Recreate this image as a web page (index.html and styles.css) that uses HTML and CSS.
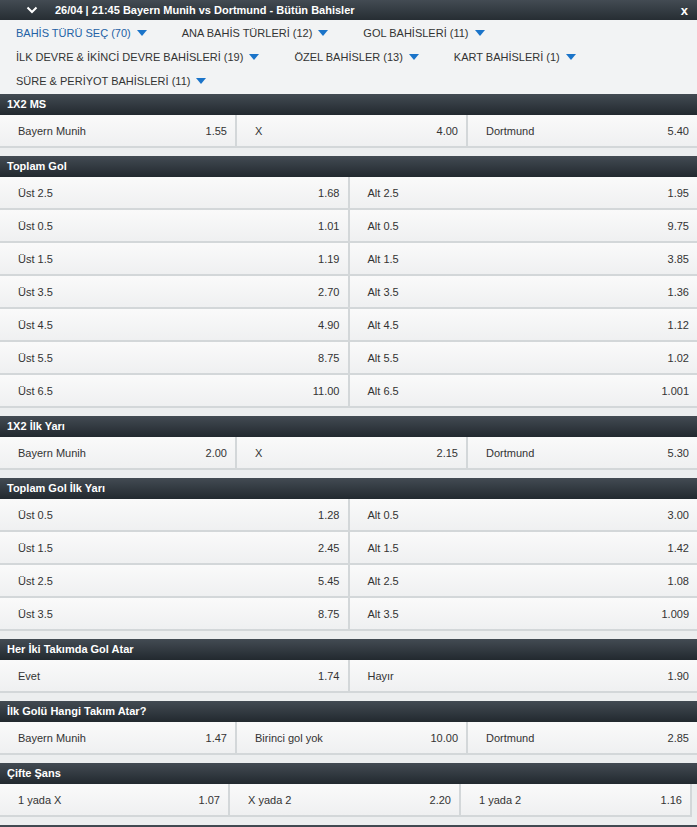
FILE: index.html
```html
<!DOCTYPE html>
<html>
<head>
    <meta charset="UTF-8">
    <meta name="viewport" content="width=device-width, initial-scale=1.0">
    <title>Bayern Munih vs Dortmund - Bütün Bahisler</title>
    <link rel="stylesheet" href="styles.css">
</head>
<body>
    <div class="match-bar">
        <svg class="chevron" width="12" height="8" viewBox="0 0 12 8">
            <polyline points="1.5,1.5 6,6 10.5,1.5" fill="none" stroke="#fff" stroke-width="2"/>
        </svg>
        <span class="match-title">26/04 | 21:45 Bayern Munih vs Dortmund - Bütün Bahisler</span>
        <span class="close">x</span>
    </div>

    <div class="filters">
        <div class="filter active">BAHİS TÜRÜ SEÇ (70) <span class="caret"></span></div>
        <div class="filter">ANA BAHİS TÜRLERİ (12) <span class="caret"></span></div>
        <div class="filter">GOL BAHİSLERİ (11) <span class="caret"></span></div>
        <div class="filter">İLK DEVRE &amp; İKİNCİ DEVRE BAHİSLERİ (19) <span class="caret"></span></div>
        <div class="filter">ÖZEL BAHİSLER (13) <span class="caret"></span></div>
        <div class="filter">KART BAHİSLERİ (1) <span class="caret"></span></div>
        <div class="filter">SÜRE &amp; PERİYOT BAHİSLERİ (11) <span class="caret"></span></div>
    </div>

    <div class="market">
        <div class="market-title">1X2 MS</div>
        <div class="odds cols-3">
            <div class="cell"><span>Bayern Munih</span><span>1.55</span></div>
            <div class="cell"><span>X</span><span>4.00</span></div>
            <div class="cell"><span>Dortmund</span><span>5.40</span></div>
        </div>
    </div>

    <div class="market">
        <div class="market-title">Toplam Gol</div>
        <div class="odds cols-2">
            <div class="cell"><span>Üst 2.5</span><span>1.68</span></div>
            <div class="cell"><span>Alt 2.5</span><span>1.95</span></div>
            <div class="cell"><span>Üst 0.5</span><span>1.01</span></div>
            <div class="cell"><span>Alt 0.5</span><span>9.75</span></div>
            <div class="cell"><span>Üst 1.5</span><span>1.19</span></div>
            <div class="cell"><span>Alt 1.5</span><span>3.85</span></div>
            <div class="cell"><span>Üst 3.5</span><span>2.70</span></div>
            <div class="cell"><span>Alt 3.5</span><span>1.36</span></div>
            <div class="cell"><span>Üst 4.5</span><span>4.90</span></div>
            <div class="cell"><span>Alt 4.5</span><span>1.12</span></div>
            <div class="cell"><span>Üst 5.5</span><span>8.75</span></div>
            <div class="cell"><span>Alt 5.5</span><span>1.02</span></div>
            <div class="cell"><span>Üst 6.5</span><span>11.00</span></div>
            <div class="cell"><span>Alt 6.5</span><span>1.001</span></div>
        </div>
    </div>

    <div class="market">
        <div class="market-title">1X2 İlk Yarı</div>
        <div class="odds cols-3">
            <div class="cell"><span>Bayern Munih</span><span>2.00</span></div>
            <div class="cell"><span>X</span><span>2.15</span></div>
            <div class="cell"><span>Dortmund</span><span>5.30</span></div>
        </div>
    </div>

    <div class="market">
        <div class="market-title">Toplam Gol İlk Yarı</div>
        <div class="odds cols-2">
            <div class="cell"><span>Üst 0.5</span><span>1.28</span></div>
            <div class="cell"><span>Alt 0.5</span><span>3.00</span></div>
            <div class="cell"><span>Üst 1.5</span><span>2.45</span></div>
            <div class="cell"><span>Alt 1.5</span><span>1.42</span></div>
            <div class="cell"><span>Üst 2.5</span><span>5.45</span></div>
            <div class="cell"><span>Alt 2.5</span><span>1.08</span></div>
            <div class="cell"><span>Üst 3.5</span><span>8.75</span></div>
            <div class="cell"><span>Alt 3.5</span><span>1.009</span></div>
        </div>
    </div>

    <div class="market">
        <div class="market-title">Her İki Takımda Gol Atar</div>
        <div class="odds cols-2">
            <div class="cell"><span>Evet</span><span>1.74</span></div>
            <div class="cell"><span>Hayır</span><span>1.90</span></div>
        </div>
    </div>

    <div class="market">
        <div class="market-title">İlk Golü Hangi Takım Atar?</div>
        <div class="odds cols-3">
            <div class="cell"><span>Bayern Munih</span><span>1.47</span></div>
            <div class="cell"><span>Birinci gol yok</span><span>10.00</span></div>
            <div class="cell"><span>Dortmund</span><span>2.85</span></div>
        </div>
    </div>

    <div class="market">
        <div class="market-title">Çifte Şans</div>
        <div class="odds cols-3 narrow">
            <div class="cell"><span>1 yada X</span><span>1.07</span></div>
            <div class="cell"><span>X yada 2</span><span>2.20</span></div>
            <div class="cell"><span>1 yada 2</span><span>1.16</span></div>
        </div>
    </div>

    <div class="market">
        <div class="market-title">Toplam Gol İkinci Yarı</div>
    </div>
</body>
</html>
```

FILE: styles.css
```css
* {
    margin: 0;
    padding: 0;
    box-sizing: border-box;
}

body {
    background-color: #eceeef;
    font-family: "Liberation Sans", Arial, sans-serif;
    font-size: 11px;
    color: #333;
}

/* top bar */
.match-bar {
    display: flex;
    align-items: center;
    height: 20px;
    background: linear-gradient(#434b53, #262d33);
    color: #fff;
    padding: 0 9px 0 26px;
}

.chevron {
    margin-right: 17px;
}

.match-title {
    font-weight: bold;
    flex: 1;
}

.close {
    font-weight: bold;
    font-size: 13px;
}

/* filter links */
.filters {
    display: flex;
    flex-wrap: wrap;
    column-gap: 35px;
    background-color: #f2f3f4;
    padding: 1px 16px;
}

.filter {
    display: flex;
    align-items: center;
    height: 24px;
    color: #333;
    white-space: nowrap;
}

.filter.active {
    color: #2361a5;
}

.caret {
    display: inline-block;
    width: 0;
    height: 0;
    margin-left: 6px;
    border-left: 5.5px solid transparent;
    border-right: 5.5px solid transparent;
    border-top: 6px solid #1b74c9;
}

/* markets */
.market {
    margin-bottom: 8px;
}

.market-title {
    height: 21px;
    line-height: 21px;
    padding-left: 7px;
    font-weight: bold;
    color: #fff;
    background: linear-gradient(#434b53, #22292f);
}

.odds {
    display: grid;
    gap: 2px;
    background-color: #d3d7d9;
    border-bottom: 2px solid #d3d7d9;
}

.cols-2 {
    grid-template-columns: 1fr 1fr;
}

.cols-3 {
    grid-template-columns: 1fr 229px 229px;
}

.odds.narrow {
    width: 692px;
    border-right: 2px solid #d3d7d9;
}

.cell {
    display: flex;
    justify-content: space-between;
    align-items: center;
    height: 31px;
    padding: 0 8px 0 18px;
    background: linear-gradient(#fafafa, #eff0f1);
}
```
